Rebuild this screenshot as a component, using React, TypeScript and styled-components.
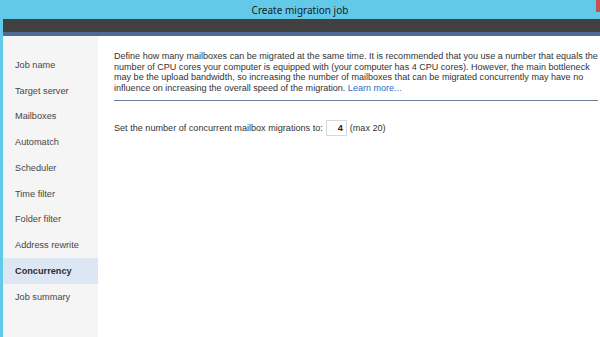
import styled, { createGlobalStyle } from 'styled-components'

const GlobalStyle = createGlobalStyle`
  html, body {
    margin: 0;
    padding: 0;
  }
  body {
    width: 600px;
    height: 337px;
    overflow: hidden;
    font-family: "Liberation Sans", Arial, sans-serif;
  }
`

const Window = styled.div`
  display: flex;
  flex-direction: column;
  width: 600px;
  height: 337px;
  background: #63c9e9;
`

const TitleBar = styled.div`
  position: relative;
  height: 19px;
  display: flex;
  align-items: center;
  justify-content: center;
  font-family: "Noto Sans", "Open Sans", sans-serif;
  font-size: 10px;
  color: #1b1b1b;
`

const CloseButton = styled.div`
  position: absolute;
  top: 0;
  right: 0;
  width: 4px;
  height: 12px;
  background: #c75050;
`

const Frame = styled.div`
  flex: 1;
  display: flex;
  flex-direction: column;
  margin-left: 3px;
  min-height: 0;
`

const Toolbar = styled.div`
  height: 13px;
  background: #414141;
`

const Strip = styled.div`
  height: 4px;
  background: #4f6a93;
`

const Main = styled.div`
  flex: 1;
  display: flex;
  min-height: 0;
`

const Sidebar = styled.nav`
  flex: 0 0 95px;
  background: #f5f5f5;
  padding-top: 16px;
  display: flex;
  flex-direction: column;
`

const NavItem = styled.div<{ $active?: boolean }>`
  height: 25.75px;
  display: flex;
  align-items: center;
  padding-left: 12px;
  font-size: 9.2px;
  color: ${p => (p.$active ? '#2f2f2f' : '#464646')};
  font-weight: ${p => (p.$active ? 'bold' : 'normal')};
  background: ${p => (p.$active ? '#dde6f3' : 'transparent')};
`

const Content = styled.div`
  flex: 1;
  min-width: 0;
  overflow: hidden;
  background: #ffffff;
  padding: 15px 0 0 16px;
`

const Description = styled.p`
  margin: 0;
  font-size: 9.05px;
  line-height: 10.5px;
  color: #333333;
  white-space: nowrap;
`

const LearnMore = styled.a`
  color: #1f6fbf;
  text-decoration: none;
`

const Separator = styled.hr`
  margin: 7px 2px 0 0;
  border: none;
  border-top: 1px solid #6d7d96;
  height: 0;
`

const SettingRow = styled.div`
  display: flex;
  align-items: center;
  gap: 3px;
  margin-top: 19px;
  font-size: 9.1px;
  color: #333333;
`

const NumberBox = styled.div`
  width: 21px;
  height: 16px;
  box-sizing: border-box;
  border: 1px solid #d4d9e0;
  display: flex;
  align-items: center;
  justify-content: flex-end;
  padding-right: 3px;
  font-weight: bold;
  color: #222222;
`

const steps = [
  'Job name',
  'Target server',
  'Mailboxes',
  'Automatch',
  'Scheduler',
  'Time filter',
  'Folder filter',
  'Address rewrite',
  'Concurrency',
  'Job summary'
]

const App = () => {
  return (
    <Window>
      <GlobalStyle />
      <TitleBar>
        Create migration job
        <CloseButton />
      </TitleBar>
      <Frame>
        <Toolbar />
        <Strip />
        <Main>
          <Sidebar>
            {steps.map(step => (
              <NavItem key={step} $active={step === 'Concurrency'}>
                {step}
              </NavItem>
            ))}
          </Sidebar>
          <Content>
            <Description>
              Define how many mailboxes can be migrated at the same time. It is recommended that you use a number that equals the
              <br />
              number of CPU cores your computer is equipped with (your computer has 4 CPU cores). However, the main bottleneck
              <br />
              may be the upload bandwidth, so increasing the number of mailboxes that can be migrated concurrently may have no
              <br />
              influence on increasing the overall speed of the migration. <LearnMore href="#">Learn more...</LearnMore>
            </Description>
            <Separator />
            <SettingRow>
              <span>Set the number of concurrent mailbox migrations to:</span>
              <NumberBox>4</NumberBox>
              <span>(max 20)</span>
            </SettingRow>
          </Content>
        </Main>
      </Frame>
    </Window>
  )
}

export default App
